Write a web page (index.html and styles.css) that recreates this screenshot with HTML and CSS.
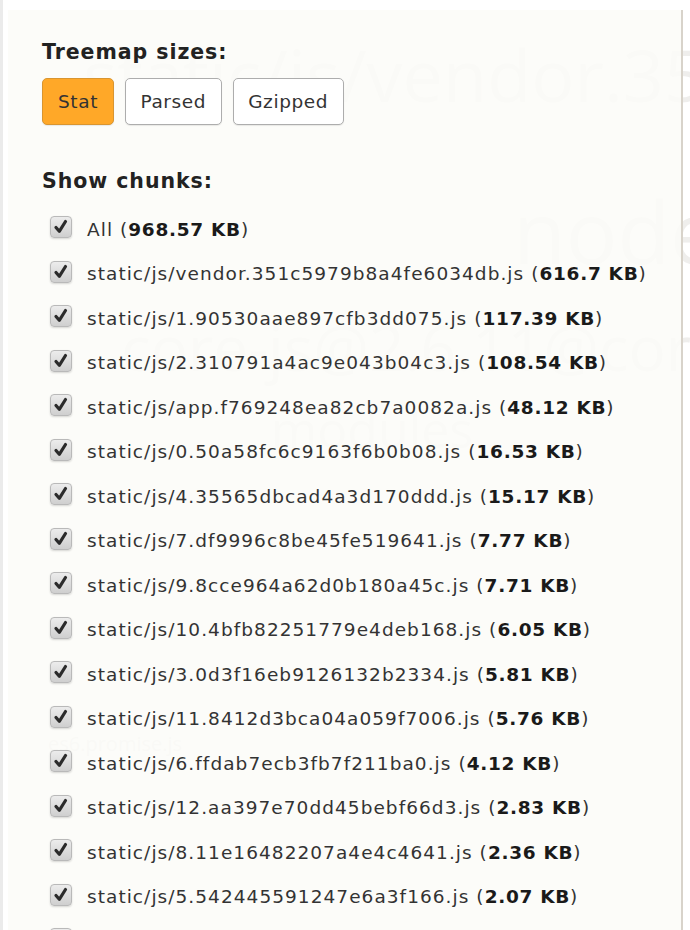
FILE: index.html
```html
<!DOCTYPE html>
<html>
<head>
<meta charset="utf-8">
<link rel="stylesheet" href="styles.css">
</head>
<body>
<div class="treemap">
  <span class="tm-label tm-1">static/js/vendor.35</span>
  <span class="tm-label tm-2">node</span>
  <span class="tm-label tm-3">core-js@2.6.11@cor</span>
  <span class="tm-label tm-4">modules</span>
  <span class="tm-small tm-5">es6.promise.js</span>
</div>
<aside class="sidebar">
  <section class="group">
    <h3 class="group-title">Treemap sizes:</h3>
    <div class="switcher">
      <button class="btn btn-active">Stat</button>
      <button class="btn">Parsed</button>
      <button class="btn">Gzipped</button>
    </div>
  </section>
  <section class="group chunks">
    <h3 class="group-title">Show chunks:</h3>
    <ul class="chunk-list" id="list"></ul>
  </section>
</aside>
<script src="app.js"></script>
</body>
</html>
```

FILE: app.js
```js
var items = [
  ["All", "968.57 KB"],
  ["static/js/vendor.351c5979b8a4fe6034db.js", "616.7 KB"],
  ["static/js/1.90530aae897cfb3dd075.js", "117.39 KB"],
  ["static/js/2.310791a4ac9e043b04c3.js", "108.54 KB"],
  ["static/js/app.f769248ea82cb7a0082a.js", "48.12 KB"],
  ["static/js/0.50a58fc6c9163f6b0b08.js", "16.53 KB"],
  ["static/js/4.35565dbcad4a3d170ddd.js", "15.17 KB"],
  ["static/js/7.df9996c8be45fe519641.js", "7.77 KB"],
  ["static/js/9.8cce964a62d0b180a45c.js", "7.71 KB"],
  ["static/js/10.4bfb82251779e4deb168.js", "6.05 KB"],
  ["static/js/3.0d3f16eb9126132b2334.js", "5.81 KB"],
  ["static/js/11.8412d3bca04a059f7006.js", "5.76 KB"],
  ["static/js/6.ffdab7ecb3fb7f211ba0.js", "4.12 KB"],
  ["static/js/12.aa397e70dd45bebf66d3.js", "2.83 KB"],
  ["static/js/8.11e16482207a4e4c4641.js", "2.36 KB"],
  ["static/js/5.542445591247e6a3f166.js", "2.07 KB"],
  ["static/js/13.a1b2c3d4e5f6a7b8c9d0.js", "1.02 KB"]
];
var check = '<svg class="tick" viewBox="0 0 22 22" width="22" height="22"><path d="M6 11.5 L9.3 15.3 L15.5 5.5" fill="none" stroke="#2b2b2b" stroke-width="3.2" stroke-linecap="round" stroke-linejoin="round"/></svg>';
var list = document.getElementById("list");
items.forEach(function (it) {
  var li = document.createElement("li");
  li.className = "chunk";
  li.innerHTML = '<span class="checkbox">' + check + '</span><span class="chunk-name">' + it[0] + ' (<strong>' + it[1] + '</strong>)</span>';
  list.appendChild(li);
});
```

FILE: styles.css
```css
html, body {
  margin: 0;
  padding: 0;
  height: 100%;
  overflow: hidden;
}
body {
  background: #ffffff;
  border-left: 3px solid #ebebeb;
  font-family: "DejaVu Sans", Verdana, sans-serif;
  position: relative;
}
.treemap {
  position: absolute;
  inset: 0;
  z-index: 0;
  overflow: hidden;
}
.tm-label {
  position: absolute;
  font-family: "Open Sans", "DejaVu Sans", sans-serif;
  font-size: 72px;
  color: #efeeec;
  white-space: nowrap;
  line-height: 1;
}
.tm-1 { left: 80px; top: 38px; }
.tm-2 { left: 510px; top: 188px; font-size: 86px; }
.tm-3 { left: 118px; top: 316px; font-size: 62px; }
.tm-4 { left: 268px; top: 404px; font-size: 50px; }
.tm-small {
  position: absolute;
  font-family: "Open Sans", sans-serif;
  font-size: 20px;
  color: #e8e7e5;
  white-space: nowrap;
}
.tm-5 { left: 45px; top: 730px; }

.sidebar {
  position: relative;
  z-index: 1;
  margin: 10px 0 0 5px;
  width: 675px;
  height: 940px;
  box-sizing: border-box;
  background: rgba(252, 251, 248, 0.86);
  border-right: 2px solid #d8d3ca;
  padding: 30px 0 0 34px;
  color: #333;
}
.group-title {
  margin: 0;
  font-size: 20.5px;
  letter-spacing: 0.95px;
  font-weight: bold;
  color: #222;
  line-height: 24px;
}
.switcher {
  display: flex;
  gap: 11px;
  margin-top: 14px;
}
.btn {
  font-family: "DejaVu Sans", Verdana, sans-serif;
  font-size: 18.5px;
  letter-spacing: 0.6px;
  color: #333;
  background: #fff;
  border: 1px solid #adadad;
  border-radius: 5px;
  height: 47px;
  padding: 0 14.5px;
  box-shadow: 0 1px 1px rgba(0,0,0,0.08);
}
.btn-active {
  background: #ffa828;
  border-color: #d99530;
  padding: 0 15px;
}
.chunks {
  margin-top: 44px;
}
.chunk-list {
  list-style: none;
  margin: 14px 0 0 0;
  padding: 0;
}
.chunk {
  display: flex;
  align-items: center;
  height: 44.5px;
  font-size: 18.5px;
  letter-spacing: 1.05px;
  color: #333;
  white-space: nowrap;
}
.chunk strong {
  color: #1a1a1a;
  letter-spacing: 0.7px;
}
.checkbox {
  width: 22px;
  height: 22px;
  box-sizing: border-box;
  margin: -4px 15px 0 8px;
  border: 1px solid #b9b9b9;
  border-radius: 4px;
  background: linear-gradient(#ececec, #cfcfcf);
  box-shadow: 0 1px 2px rgba(0,0,0,0.15);
  display: flex;
  align-items: center;
  justify-content: center;
}
.tick {
  display: block;
  margin: -1px;
}
```
